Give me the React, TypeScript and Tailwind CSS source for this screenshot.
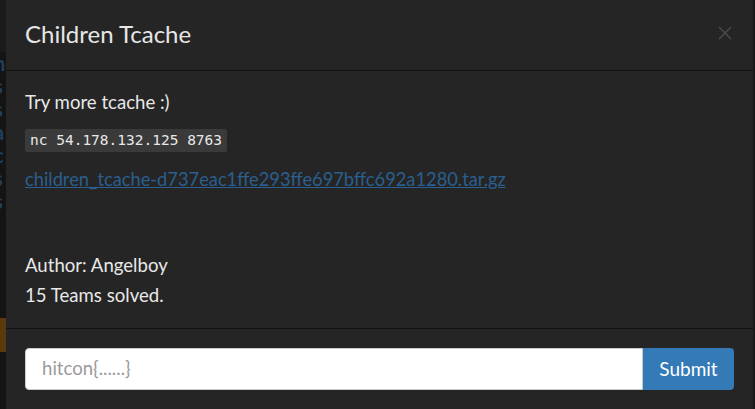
import React from "react";

export default function App() {
  const font = { fontFamily: '"Lato", "Noto Sans", sans-serif' };
  return (
    <div className="w-[755px] h-[409px] overflow-hidden flex bg-[#161616]" style={font}>
      {/* backdrop strip on the left */}
      <div className="w-[6px] h-full overflow-hidden flex flex-col bg-[#141414]">
        <div className="h-[52px] shrink-0 bg-[#1a1a1a]" />
        <div className="flex flex-col text-[#1f3f60] text-[20px] leading-[23px] font-bold">
          <span className="-ml-[6px]">h</span>
          <span className="-ml-[6px]">s</span>
          <span className="-ml-[6px]">s</span>
          <span className="-ml-[6px]">a</span>
          <span className="-ml-[6px]">c</span>
          <span className="-ml-[6px]">s</span>
          <span className="-ml-[6px]">s</span>
        </div>
        <div className="mt-[105px] h-[34px] shrink-0 bg-[#5a3a0c]" />
      </div>

      {/* modal */}
      <div className="w-[747px] h-full bg-[#252525] flex flex-col">
        <div className="h-[71px] px-[19px] flex items-center justify-between border-b border-[#121212]">
          <h4 className="text-[24px] leading-[30px] text-[#e6e6e6] pb-[2px]">Children Tcache</h4>
          <svg width="16" height="16" viewBox="0 0 16 16" className="mr-[1px] mb-[5px]">
            <path d="M2 2 L14 14 M14 2 L2 14" stroke="#4d4d4d" strokeWidth="1.4" />
          </svg>
        </div>
        <div className="h-[257px] px-[19px] pt-[18px] text-[18.6px] text-[#e8e8e8]">
          <p className="leading-[26px]">Try more tcache :)</p>
          <div className="mt-[14px] flex">
            <code
              className="h-[23px] px-[5px] bg-[#3a3a3a] text-[#e8e8e8] text-[14.5px] leading-[23px] rounded-[2px]"
              style={{ fontFamily: '"DejaVu Sans Mono", monospace' }}
            >
              nc 54.178.132.125 8763
            </code>
          </div>
          <p className="mt-[14px] leading-[26px] text-[18.3px]">
            <a className="text-[#2a5f8f] underline">children_tcache-d737eac1ffe293ffe697bffc692a1280.tar.gz</a>
          </p>
          <p className="mt-[58px] leading-[30px]">Author: Angelboy</p>
          <p className="leading-[30px]">15 Teams solved.</p>
        </div>
        <div className="flex-1 border-t border-[#121212] px-[19px] pt-[19px]">
          <div className="flex h-[42px]">
            <div className="flex-1 bg-white border border-[#cccccc] rounded-l-[4px] flex items-center pl-[16px] text-[18.6px] text-[#9a9a9a]">
              hitcon{"{......}"}
            </div>
            <button className="w-[91px] bg-[#337ab7] rounded-r-[4px] text-white text-[19px]">Submit</button>
          </div>
        </div>
      </div>
      <div className="flex-1 bg-[#1a1a1a]" />
    </div>
  );
}
